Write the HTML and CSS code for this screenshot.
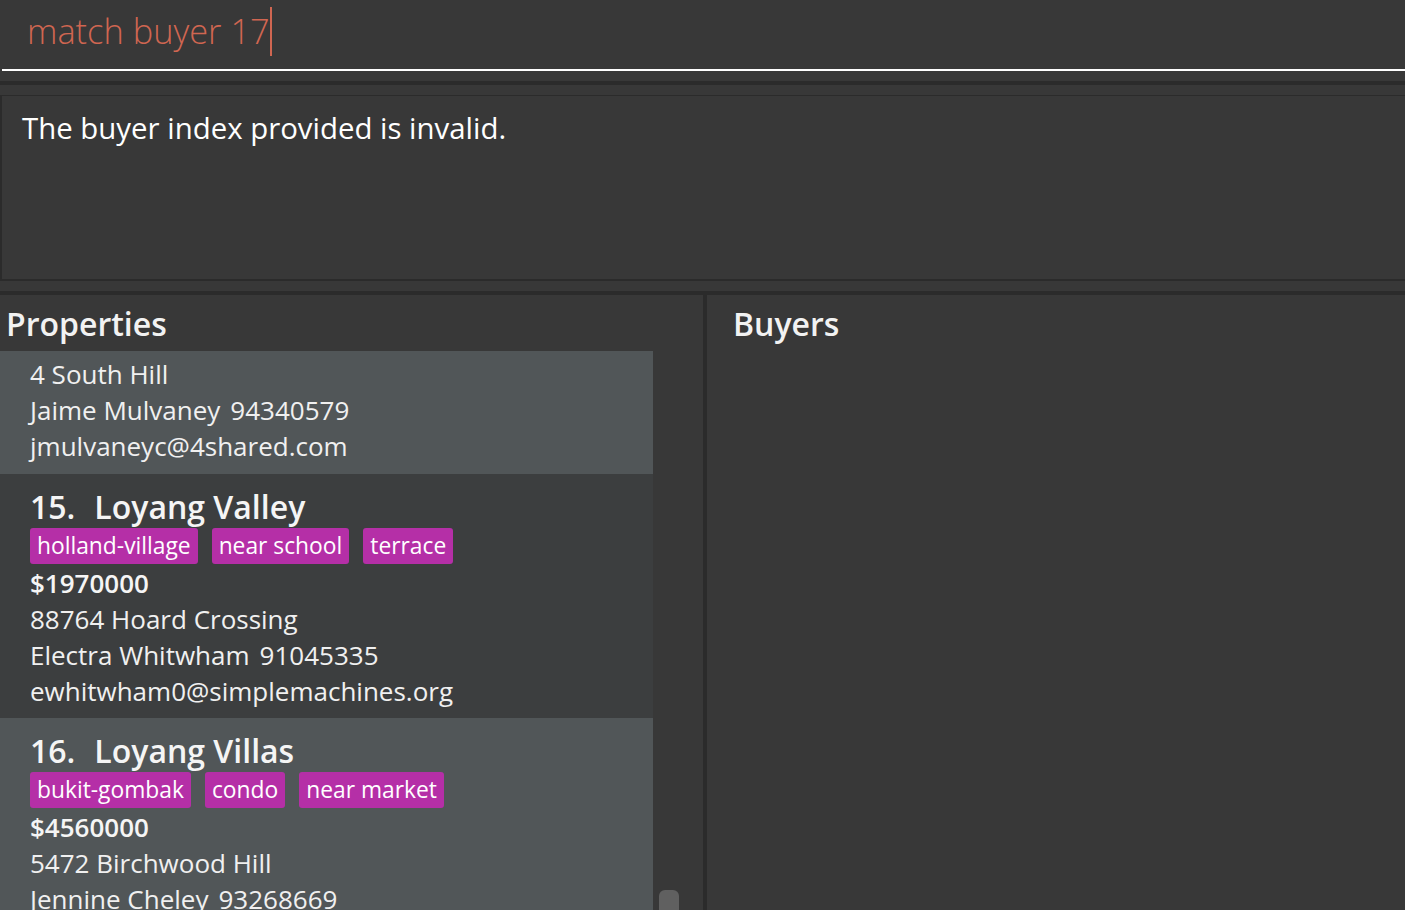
FILE: index.html
```html
<!DOCTYPE html>
<html lang="en">
<head>
<meta charset="utf-8">
<title>Property Manager</title>
<link rel="stylesheet" href="styles.css">
</head>
<body>
<div class="app">
  <div class="command-box">
    <div class="command-input"><span class="command-text">match buyer 17</span><span class="caret"></span></div>
  </div>
  <div class="band"></div>
  <div class="result-wrap">
    <div class="result-box">The buyer index provided is invalid.</div>
  </div>
  <div class="band"></div>
  <div class="panels">
    <section class="panel panel-left">
      <h2 class="panel-title">Properties</h2>
      <div class="list-area">
        <div class="list">
          <div class="card odd partial">
            <div class="line">4 South Hill</div>
            <div class="line">Jaime Mulvaney<span class="phone">94340579</span></div>
            <div class="line">jmulvaneyc@4shared.com</div>
          </div>
          <div class="card even">
            <div class="card-title"><span class="card-id">15.</span><span class="card-name">Loyang Valley</span></div>
            <div class="tags"><span class="tag">holland-village</span><span class="tag">near school</span><span class="tag">terrace</span></div>
            <div class="price">$1970000</div>
            <div class="line">88764 Hoard Crossing</div>
            <div class="line">Electra Whitwham<span class="phone">91045335</span></div>
            <div class="line">ewhitwham0@simplemachines.org</div>
          </div>
          <div class="card odd">
            <div class="card-title"><span class="card-id">16.</span><span class="card-name">Loyang Villas</span></div>
            <div class="tags"><span class="tag">bukit-gombak</span><span class="tag">condo</span><span class="tag">near market</span></div>
            <div class="price">$4560000</div>
            <div class="line">5472 Birchwood Hill</div>
            <div class="line">Jennine Cheley<span class="phone">93268669</span></div>
          </div>
        </div>
        <div class="scrollbar"><div class="thumb"></div></div>
      </div>
    </section>
    <div class="divider"></div>
    <section class="panel panel-right">
      <h2 class="panel-title">Buyers</h2>
    </section>
  </div>
</div>
</body>
</html>
```

FILE: styles.css
```css
html, body {
  margin: 0;
  padding: 0;
  height: 100%;
  background: #383838;
  overflow: hidden;
}
.app {
  width: 1405px;
  height: 910px;
  display: flex;
  flex-direction: column;
  font-family: "Open Sans", "Noto Sans", sans-serif;
  color: #ffffff;
  overflow: hidden;
}
.command-box {
  height: 81px;
  padding: 0 0 0 2px;
  box-sizing: border-box;
  display: flex;
  flex-direction: column;
  flex: none;
}
.command-input {
  height: 69px;
  border-bottom: 2px solid #ffffff;
  display: flex;
  align-items: center;
  padding-left: 25px;
}
.command-text {
  font-size: 34.4px;
  font-weight: 300;
  color: #d06651;
  line-height: 1;
  padding-bottom: 6px;
  white-space: nowrap;
}
.caret {
  display: inline-block;
  width: 2px;
  height: 49px;
  background: #d06651;
  margin-left: 0;
  margin-bottom: 6px;
}
.band {
  height: 4px;
  background: #2b2b2b;
  flex: none;
}
.result-wrap {
  padding: 10px 0;
  flex: none;
}
.result-box {
  height: 186px;
  border: 2px solid #2b2b2b;
  border-right: none;
  border-top-width: 1px;
  padding: 12px 20px 10px;
  box-sizing: border-box;
  font-size: 29.4px;
  line-height: 1.4;
  color: #ffffff;
}
.panels {
  flex: 1;
  display: flex;
  min-height: 0;
}
.panel {
  display: flex;
  flex-direction: column;
  min-height: 0;
}
.panel-left {
  width: 703px;
  flex: none;
}
.panel-right {
  flex: 1;
  padding-left: 20px;
}
.divider {
  width: 4px;
  background: #2b2b2b;
  flex: none;
}
.panel-title {
  margin: 0;
  height: 56px;
  font-size: 32px;
  font-weight: 600;
  line-height: 58px;
  padding-left: 6px;
  color: #f2f2f2;
  white-space: nowrap;
}
.list-area {
  flex: 1;
  display: flex;
  min-height: 0;
  overflow: hidden;
}
.list {
  width: 653px;
  flex: none;
  overflow: hidden;
}
.scrollbar {
  width: 32px;
  position: relative;
}
.thumb {
  position: absolute;
  left: 6px;
  top: 539px;
  width: 20px;
  height: 120px;
  border-radius: 6px;
  background: #606060;
}
.card {
  height: 244px;
  box-sizing: border-box;
  padding: 15px 0 9px 30px;
  display: flex;
  flex-direction: column;
}
.card.partial {
  height: 123px;
  padding-top: 5px;
  padding-bottom: 10px;
}
.odd { background: #515658; }
.even { background: #3c3e3f; }
.card-title {
  height: 36px;
  line-height: 36px;
  font-size: 32px;
  font-weight: 600;
  color: #f5f5f5;
  white-space: nowrap;
}
.card-id {
  margin-right: 19px;
}
.tags {
  margin-top: 3px;
  height: 36px;
  display: flex;
  gap: 14px;
}
.tag {
  background: #b52fa7;
  color: #ffffff;
  font-size: 22.8px;
  line-height: 36px;
  height: 36px;
  padding: 0 7px;
  border-radius: 3px;
  white-space: nowrap;
}
.price {
  height: 36px;
  line-height: 36px;
  margin-top: 1px;
  font-size: 26px;
  font-weight: 600;
  color: #f5f5f5;
}
.line {
  height: 36px;
  line-height: 36px;
  font-size: 26px;
  color: #f0f0f0;
  white-space: nowrap;
}
.phone {
  margin-left: 10px;
}
```
